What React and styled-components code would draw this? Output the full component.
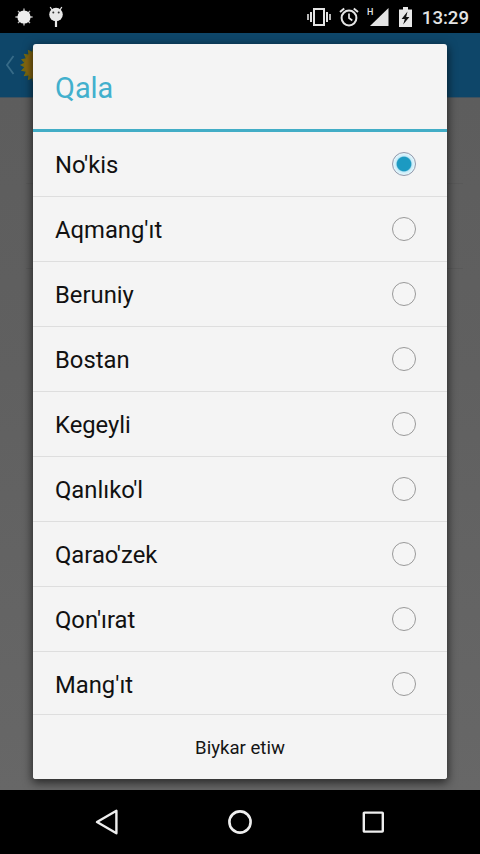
import React, { useState } from 'react';
import styled, { createGlobalStyle } from 'styled-components';

const GlobalStyle = createGlobalStyle`
  * {
    box-sizing: border-box;
  }

  body {
    margin: 0;
    background: #000;
    font-family: Roboto, 'Noto Sans', sans-serif;
  }
`;

const Screen = styled.div`
  position: relative;
  display: flex;
  flex-direction: column;
  width: 480px;
  height: 854px;
  overflow: hidden;
  background: #000;
`;

const StatusBar = styled.header`
  display: flex;
  justify-content: space-between;
  height: 33px;
  flex-shrink: 0;
  background: #000;
`;

const Notifications = styled.div`
  display: flex;
  align-items: center;
  gap: 14px;
  padding-left: 15px;
`;

const SystemIcons = styled.div`
  display: flex;
  align-items: center;
  padding-right: 11px;
  gap: 8px;
`;

const Clock = styled.span`
  margin-left: 2px;
  padding-top: 2px;
  color: #e4e4e4;
  font-size: 18.6px;
  font-weight: 500;
  line-height: 22px;
`;

const ActionBar = styled.div`
  display: flex;
  align-items: center;
  height: 65px;
  flex-shrink: 0;
  padding-left: 5px;
  background: #0e4669;
  border-bottom: 1px solid #3f5260;
`;

const Page = styled.main`
  flex: 1;
  background: linear-gradient(#5d5d5d, #606060 40%, #676767);
`;

const PageRow = styled.div`
  height: ${({ $height }) => $height}px;
  margin: 0 17px 0 26px;
  border-bottom: 1px solid #595959;
`;

const NavBar = styled.nav`
  display: flex;
  align-items: center;
  justify-content: space-between;
  height: 64px;
  flex-shrink: 0;
  padding: 0 93px;
  background: #000;
`;

const NavButton = styled.button`
  display: flex;
  padding: 0;
  border: 0;
  background: none;
`;

const Dialog = styled.section`
  position: absolute;
  top: 44px;
  left: 33px;
  display: flex;
  flex-direction: column;
  width: 414px;
  height: 735px;
  overflow: hidden;
  background: #f4f4f4;
  border-radius: 3px;
`;

const DialogShadow = styled.div`
  position: absolute;
  top: 44px;
  left: 33px;
  width: 414px;
  height: 735px;
  border-radius: 3px;
  box-shadow: 0 3px 10px 1px rgba(0, 0, 0, 0.6);
`;

const Title = styled.h1`
  display: flex;
  align-items: center;
  height: 88px;
  flex-shrink: 0;
  margin: 0;
  padding: 2px 22px 0;
  border-bottom: 3px solid #42adc6;
  color: #42b0cd;
  font-size: 28.9px;
  font-weight: 400;
`;

const CityList = styled.div`
  flex: 1;
  min-height: 0;
  overflow: hidden;
`;

const CityRow = styled.label`
  display: flex;
  align-items: center;
  justify-content: space-between;
  height: 65px;
  padding: 0 31px 0 22px;
  border-bottom: 1px solid #dedede;
  color: #111;
  font-size: 23.8px;
`;

const CityName = styled.span`
  padding-top: 2px;
  line-height: 28px;
`;

const Radio = styled.input`
  appearance: none;
  width: 24px;
  height: 24px;
  margin: 0;
  border: 1.5px solid ${({ checked }) => (checked ? '#9499ab' : '#999')};
  border-radius: 50%;
  background: ${({ checked }) =>
    checked
      ? 'radial-gradient(circle, #1c9ac2 0 6.8px, #c5eaf8 8px, #def4fb 10px)'
      : '#f5f5f5'};
`;

const CancelButton = styled.button`
  height: 65px;
  flex-shrink: 0;
  padding: 2px 0 0;
  border: 0;
  border-top: 1px solid #dedede;
  background: #f4f4f4;
  color: #151515;
  font-family: inherit;
  font-size: 18.6px;
`;

const cities = [
  "No'kis",
  "Aqmang'ıt",
  'Beruniy',
  'Bostan',
  'Kegeyli',
  "Qanlıko'l",
  "Qarao'zek",
  "Qon'ırat",
  "Mang'ıt",
];

const rayPoints = (count, outer, inner) =>
  Array.from({ length: count * 2 }, (_, i) => {
    const r = i % 2 ? inner : outer;
    const a = (Math.PI * i) / count;
    return `${(r * Math.sin(a)).toFixed(2)},${(-r * Math.cos(a)).toFixed(2)}`;
  }).join(' ');

const SunIcon = () => (
  <svg width="18" height="18" viewBox="-9 -9 18 18">
    <path d="M0-8.6V8.6M-8.6 0H8.6M-6-6 6 6M6-6-6 6" stroke="#bbb" strokeWidth="1.4" />
    <circle r="6.6" fill="#eee" />
  </svg>
);

const DebugIcon = () => (
  <svg width="18" height="22" viewBox="0 0 18 22">
    <path d="M5 4 3.2 1M13 4l1.8-3" stroke="#ddd" strokeWidth="1.3" />
    <circle cx="9" cy="8.5" r="6.8" fill="#e8e8e8" />
    <circle cx="6.3" cy="6.4" r="1" fill="#333" />
    <circle cx="11.7" cy="6.4" r="1" fill="#333" />
    <path d="M9 15v6" stroke="#e8e8e8" strokeWidth="2.2" />
  </svg>
);

const VibrateIcon = () => (
  <svg width="24" height="20" viewBox="0 0 24 20" fill="none" stroke="#e4e4e4" strokeWidth="2">
    <rect x="7" y="2" width="10" height="16" />
    <path d="M4 5v10M20 5v10" />
    <path d="M1 7v6M23 7v6" strokeWidth="1.6" />
  </svg>
);

const AlarmIcon = () => (
  <svg width="20" height="20" viewBox="0 0 20 20" fill="none" stroke="#e4e4e4" strokeWidth="2">
    <circle cx="10" cy="11" r="7.4" />
    <path d="M10 6.5V11l3.3 2.5" strokeWidth="1.7" />
    <path d="M1 5 5.2 1.5M19 5l-4.2-3.5" />
  </svg>
);

const SignalIcon = () => (
  <svg width="24" height="20" viewBox="0 0 24 20">
    <path d="M21.5 1v18H3z" fill="#e4e4e4" />
    <path d="M0 0h9v10H0z" fill="#000" />
    <text x="0" y="8" fill="#e4e4e4" fontFamily="Roboto" fontSize="9" fontWeight="500">
      H
    </text>
  </svg>
);

const BatteryIcon = () => (
  <svg width="13" height="20" viewBox="0 0 13 20">
    <path d="M0 2.5h4V0h5v2.5h4V20H0z" fill="#e8e8e8" />
    <path d="M8.5 4.5 2.6 12h3.2l-1.6 5.5L10.4 10H7.2z" fill="#111" />
  </svg>
);

const AppIcon = () => (
  <svg width="46" height="44" viewBox="-24 -22 46 44">
    <polygon points={rayPoints(20, 19, 15)} fill="#75680f" />
    <circle r="14.5" fill="#856511" />
  </svg>
);

function App() {
  const [selected, setSelected] = useState("No'kis");

  return (
    <>
      <GlobalStyle />
      <Screen>
        <StatusBar>
          <Notifications>
            <SunIcon />
            <DebugIcon />
          </Notifications>
          <SystemIcons>
            <VibrateIcon />
            <AlarmIcon />
            <SignalIcon />
            <BatteryIcon />
            <Clock>13:29</Clock>
          </SystemIcons>
        </StatusBar>

        <ActionBar>
          <svg width="10" height="20" viewBox="0 0 10 20" fill="none" stroke="#376b88" strokeWidth="1.8">
            <path d="M8.5 1 2 10l6.5 9" />
          </svg>
          <AppIcon />
        </ActionBar>

        <Page>
          <PageRow $height={86} />
          <PageRow $height={85} />
        </Page>

        <DialogShadow />

        <NavBar>
          <NavButton aria-label="Back">
            <svg width="28" height="28" viewBox="0 0 28 28" fill="none" stroke="#eee" strokeWidth="2.4">
              <path d="M23.4 2.8v22.4L4 14z" strokeLinejoin="round" />
            </svg>
          </NavButton>
          <NavButton aria-label="Home">
            <svg width="28" height="28" viewBox="0 0 28 28" fill="none" stroke="#eee" strokeWidth="2.6">
              <circle cx="14" cy="14" r="10.6" />
            </svg>
          </NavButton>
          <NavButton aria-label="Recent apps">
            <svg width="28" height="28" viewBox="0 0 28 28" fill="none" stroke="#eee" strokeWidth="2.4">
              <rect x="4.8" y="4.6" width="19" height="19" rx="0.6" />
            </svg>
          </NavButton>
        </NavBar>

        <Dialog role="dialog">
          <Title>Qala</Title>
          <CityList>
            {cities.map((city) => (
              <CityRow key={city}>
                <CityName>{city}</CityName>
                <Radio
                  type="radio"
                  name="city"
                  checked={selected === city}
                  onChange={() => setSelected(city)}
                />
              </CityRow>
            ))}
          </CityList>
          <CancelButton>Biykar etiw</CancelButton>
        </Dialog>
      </Screen>
    </>
  );
}

export default App;
